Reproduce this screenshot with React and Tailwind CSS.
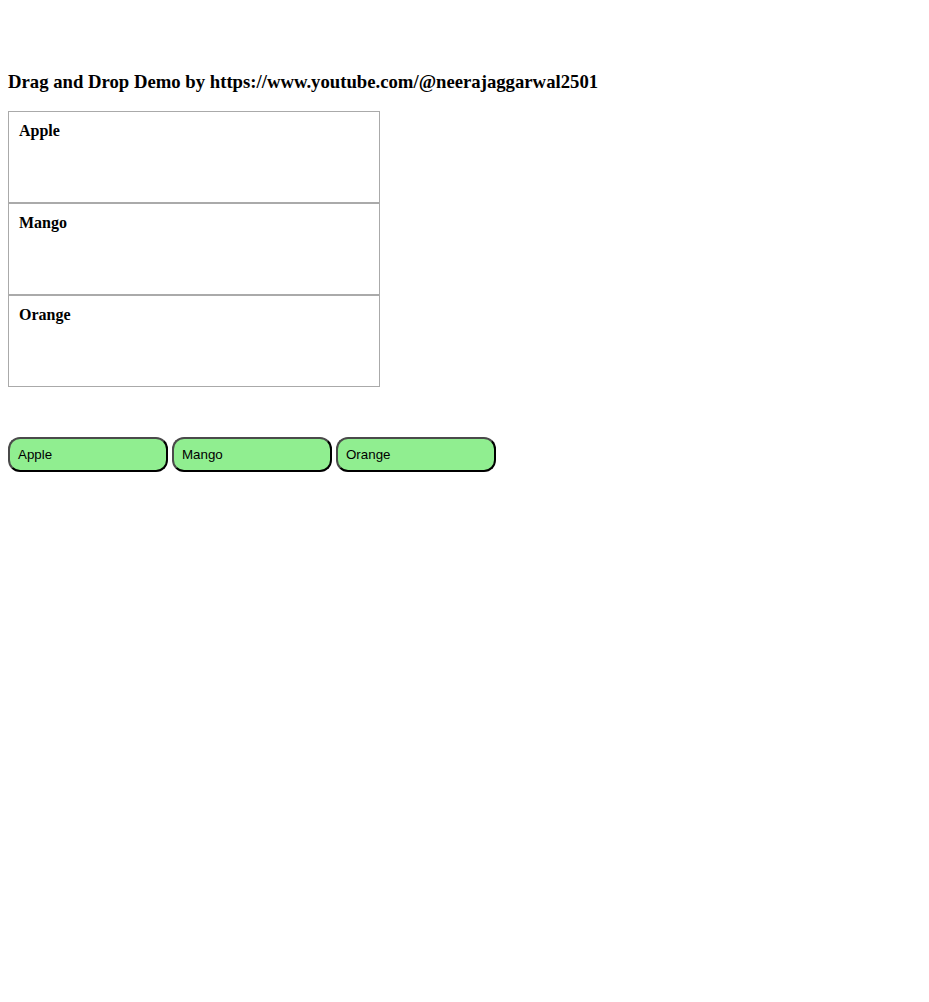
export default function App() {
  const fruits = ["Apple", "Mango", "Orange"];

  return (
    <div className="min-h-screen bg-white px-2 pt-[71px] text-black">
      <h3 className="mb-[18.5px] font-['Liberation_Serif',serif] text-[18.72px] font-bold leading-[21.5px]">
        Drag and Drop Demo by https://www.youtube.com/@neerajaggarwal2501
      </h3>

      {/* Drop zones */}
      <div className="w-[372px]">
        {fruits.map((f) => (
          <div
            key={f}
            className="h-[92px] border border-[#aaaaaa] px-[10px] py-[10px] font-['Liberation_Serif',serif] text-base font-bold leading-[18px]"
          >
            {f}
          </div>
        ))}
      </div>

      {/* Draggable items */}
      <div className="mt-[50px] flex gap-1">
        {fruits.map((f) => (
          <button
            key={f}
            draggable
            className="h-[35px] w-[160px] rounded-[12px] border-2 border-t-[#4a4a4a] border-l-[#4a4a4a] border-r-black border-b-black bg-[#90ee90] pl-2 text-left font-['Liberation_Sans',Arial,sans-serif] text-[13.33px] leading-[15px]"
          >
            {f}
          </button>
        ))}
      </div>
    </div>
  );
}
